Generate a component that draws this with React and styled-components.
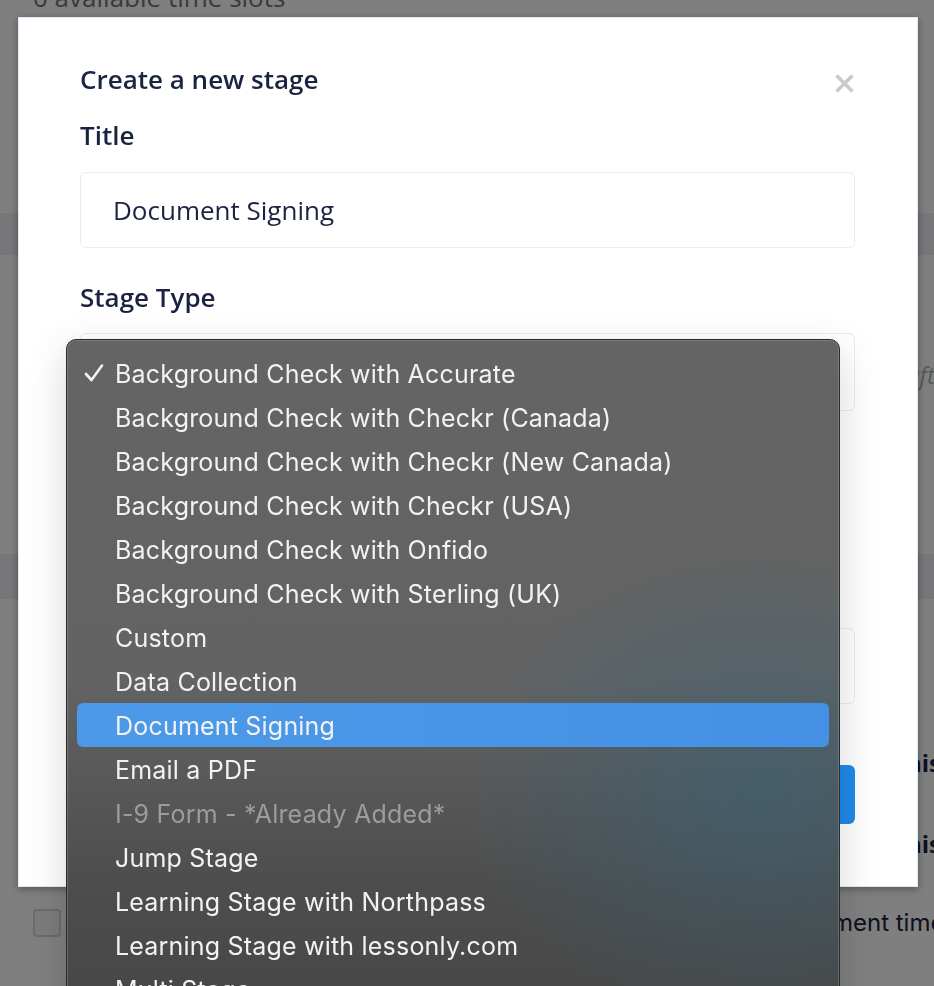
import React from 'react'
import styled, { createGlobalStyle } from 'styled-components'

const GlobalStyle = createGlobalStyle`
html, body {
  margin: 0;
  padding: 0;
  height: 100%;
  overflow: hidden;
  background: #ffffff;
}
* { box-sizing: border-box; }
`

const stageTypes = [
  { label: 'Background Check with Accurate', checked: true },
  { label: 'Background Check with Checkr (Canada)' },
  { label: 'Background Check with Checkr (New Canada)' },
  { label: 'Background Check with Checkr (USA)' },
  { label: 'Background Check with Onfido' },
  { label: 'Background Check with Sterling (UK)' },
  { label: 'Custom' },
  { label: 'Data Collection' },
  { label: 'Document Signing', active: true },
  { label: 'Email a PDF' },
  { label: 'I-9 Form - *Already Added*', disabled: true },
  { label: 'Jump Stage' },
  { label: 'Learning Stage with Northpass' },
  { label: 'Learning Stage with lessonly.com' },
  { label: 'Multi Stage' },
]

/* ---------- page behind the modal ---------- */

const Page = styled.div`
  width: 934px;
  height: 986px;
  display: flex;
  flex-direction: column;
  font-family: "Open Sans", "Liberation Sans", sans-serif;
  color: #1a2340;
`

const SlotsNote = styled.div`
  margin-top: -20px;
  padding-left: 33px;
  font-size: 26px;
  line-height: 34px;
  color: #747474;
`

const Band = styled.div`
  margin-top: ${props => props.top}px;
  height: ${props => props.h}px;
  background: #eeeff2;
`

const FragmentRow = styled.div`
  margin-top: ${props => props.top}px;
  padding-left: ${props => props.left}px;
  font-size: 24px;
  line-height: 34px;
  white-space: nowrap;
  font-style: ${props => props.italic ? 'italic' : 'normal'};
  font-weight: ${props => props.bold ? 700 : 400};
  color: ${props => props.muted ? '#b0b0b0' : '#1a2340'};
`

const CheckRow = styled.div`
  margin-top: ${props => props.top}px;
  padding-left: 33px;
  display: flex;
  align-items: center;
  gap: 14px;
`

const CheckBox = styled.span`
  flex-shrink: 0;
  width: 28px;
  height: 28px;
  border: 2px solid #d6d6d6;
  border-radius: 4px;
  background: #f7f7f7;
`

const CheckLabel = styled.span`
  font-family: Inter, "Liberation Sans", sans-serif;
  font-size: 24px;
  line-height: 34px;
  white-space: nowrap;
  padding-left: ${props => props.offset}px;
`

const Overlay = styled.div`
  position: fixed;
  inset: 0;
  background: rgba(0, 0, 0, 0.5);
`

/* ---------- modal ---------- */

const Modal = styled.div`
  position: fixed;
  top: 17px;
  left: 18px;
  width: 900px;
  height: 870px;
  background: #ffffff;
  border: 1px solid #dde9f8;
  box-shadow: 0 2px 8px rgba(0, 0, 0, 0.35);
  padding: 44px 62px 62px 61px;
  display: flex;
  flex-direction: column;
  font-family: "Open Sans", "Liberation Sans", sans-serif;
  color: #1a2340;
`

const Header = styled.div`
  display: flex;
  justify-content: space-between;
  align-items: center;
  margin-bottom: 22px;
`

const Heading = styled.h2`
  margin: 0;
  font-size: 26px;
  line-height: 34px;
  font-weight: 600;
`

const Close = styled.button`
  border: none;
  background: transparent;
  padding: 0;
  margin: 8px 1px 0 0;
  display: flex;
  cursor: pointer;
`

const Label = styled.div`
  font-size: 26px;
  line-height: 34px;
  font-weight: 600;
  margin-bottom: ${props => props.gap ?? 20}px;
`

const Field = styled.div`
  height: 78px;
  border: 1.5px solid #ececec;
  border-radius: 6px;
  padding: 0 32px;
  display: flex;
  align-items: center;
  font-size: 26px;
  color: #1a2340;
  margin-bottom: ${props => props.gap ?? 32}px;
`

const SelectWrap = styled.div`
  position: relative;
  margin-bottom: ${props => props.gap ?? 32}px;
`

const Hint = styled.div`
  font-size: 20px;
  line-height: 34px;
  color: #1a2340;
  margin-bottom: 55px;
`

const Actions = styled.div`
  display: flex;
  justify-content: flex-end;
  margin-top: 61px;
`

const Primary = styled.button`
  height: 59px;
  width: 160px;
  border: none;
  border-radius: 6px;
  background: #1f8aeb;
  color: #fff;
  font-family: inherit;
  font-size: 22px;
  font-weight: 600;
`

/* ---------- native select popup ---------- */

const Menu = styled.ul`
  position: absolute;
  top: 6px;
  left: -14px;
  width: 774px;
  margin: 0;
  padding: 11px 10px;
  list-style: none;
  border-radius: 10px;
  border: 1px solid #2a2a2a;
  box-shadow: inset 0 0 0 1px rgba(255, 255, 255, 0.16), 0 12px 40px rgba(0, 0, 0, 0.16);
  background:
    radial-gradient(ellipse 300px 240px at 90% 66%, rgba(56, 98, 118, 0.6), rgba(56, 98, 118, 0) 100%),
    linear-gradient(180deg, #646464 0%, #636363 50%, #4d4d4d 80%, #464646 100%);
  font-family: Inter, "Noto Sans", sans-serif;
  z-index: 2;
`

const Option = styled.li`
  position: relative;
  height: 44px;
  padding-left: 38px;
  padding-top: 1px;
  display: flex;
  align-items: center;
  border-radius: 6px;
  font-size: 25px;
  letter-spacing: 0.2px;
  white-space: nowrap;
  color: ${props => props.disabled ? '#9c9c9c' : '#f2f2f2'};
  background: ${props => props.active ? 'linear-gradient(90deg, #4d99e9, #4490e4)' : 'transparent'};
`

const Tick = styled.svg`
  position: absolute;
  left: 7px;
  top: 13px;
`

const CloseIcon = () => (
  <svg width="19" height="19" viewBox="0 0 19 19">
    <path d="M1.5 1.5 L17.5 17.5 M17.5 1.5 L1.5 17.5" stroke="#c9c9c9" strokeWidth="3.6" strokeLinecap="butt" />
  </svg>
)

const App = () => {
  return (
    <>
      <GlobalStyle />
      <Page>
        <SlotsNote>0 available time slots</SlotsNote>
        <Band top={199} h={42} />
        <FragmentRow top={103} left={906} italic muted>after the applicant</FragmentRow>
        <Band top={162} h={45} />
        <FragmentRow top={147} left={892} bold>This stage</FragmentRow>
        <FragmentRow top={47} left={892} bold>This stage</FragmentRow>
        <CheckRow top={45}>
          <CheckBox />
          <CheckLabel offset={418}>Let applicants pick an appointment time</CheckLabel>
        </CheckRow>
      </Page>
      <Overlay />
      <Modal>
        <Header>
          <Heading>Create a new stage</Heading>
          <Close aria-label="Close"><CloseIcon /></Close>
        </Header>
        <Label>Title</Label>
        <Field>Document Signing</Field>
        <Label gap={19}>Stage Type</Label>
        <SelectWrap gap={40}>
          <Field gap={0}>Document Signing</Field>
          <Menu>
            {stageTypes.map(item => (
              <Option key={item.label} active={item.active} disabled={item.disabled}>
                {item.checked && (
                  <Tick width="20" height="18" viewBox="0 0 20 18">
                    <path d="M2 10 L7.5 16 L18 1.5" fill="none" stroke="#f2f2f2" strokeWidth="2.6" strokeLinecap="round" strokeLinejoin="round" />
                  </Tick>
                )}
                {item.label}
              </Option>
            ))}
          </Menu>
        </SelectWrap>
        <Hint>Applicants will be asked to review and sign the selected document before moving on to the next stage</Hint>
        <Label>Document</Label>
        <Field gap={0}>Offer Letter</Field>
        <Actions>
          <Primary>Save</Primary>
        </Actions>
      </Modal>
    </>
  )
}

export default App
